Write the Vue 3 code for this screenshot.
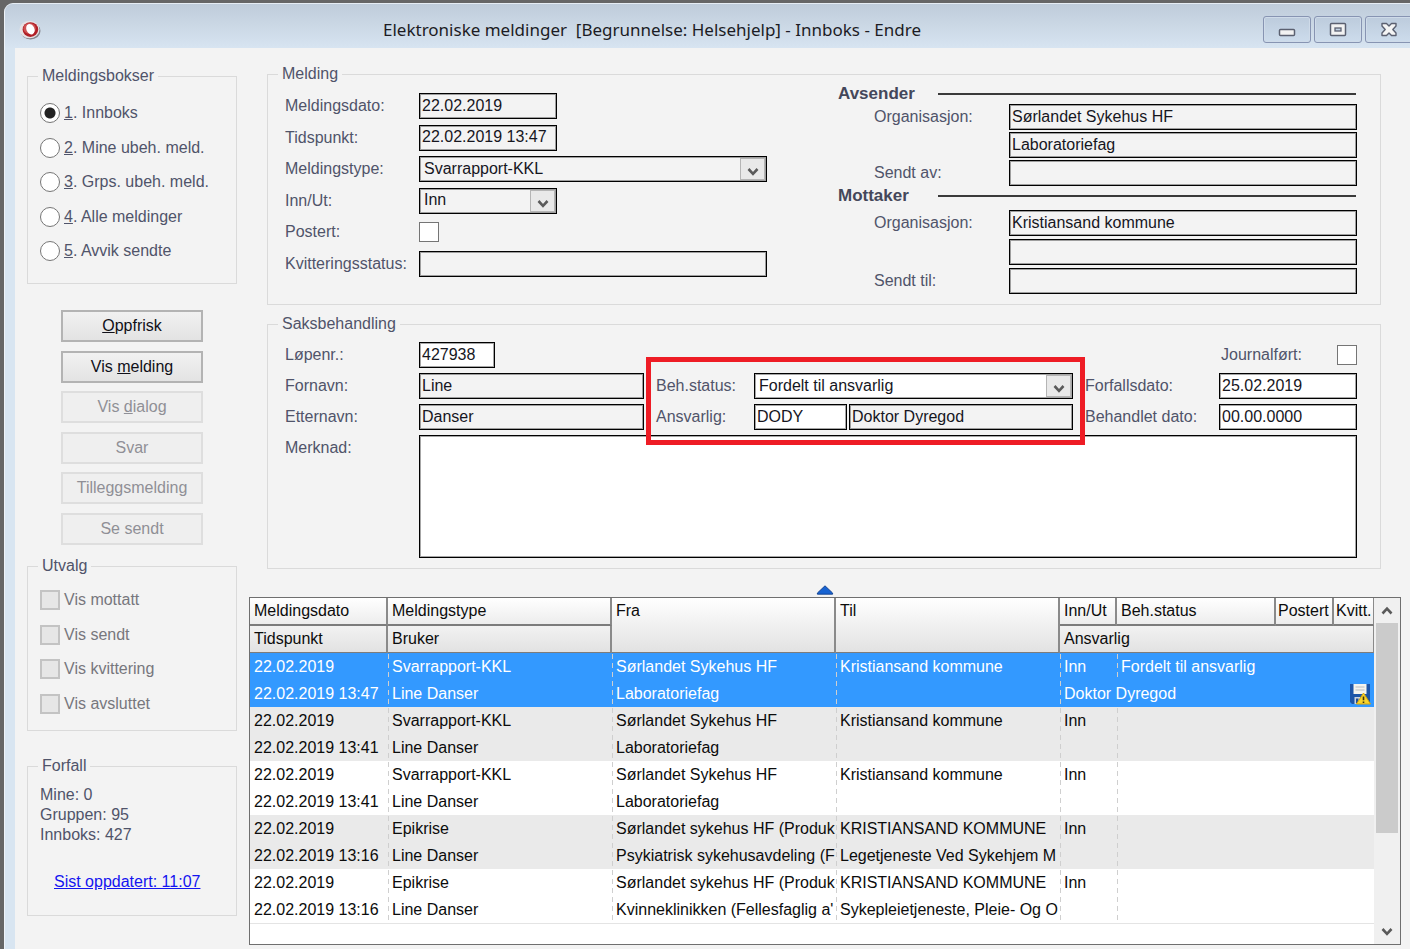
<script setup>
import { ref } from 'vue'

const boxes = ['Innboks', 'Mine ubeh. meld.', 'Grps. ubeh. meld.', 'Alle meldinger', 'Avvik sendte']
const box = ref(0)
const filters = ['Vis mottatt', 'Vis sendt', 'Vis kvittering', 'Vis avsluttet']
const actions = [
  { pre: '', key: 'O', post: 'ppfrisk', off: false },
  { pre: 'Vis ', key: 'm', post: 'elding', off: false },
  { pre: 'Vis ', key: 'd', post: 'ialog', off: true },
  { pre: 'Svar', key: '', post: '', off: true },
  { pre: 'Tilleggsmelding', key: '', post: '', off: true },
  { pre: 'Se sendt', key: '', post: '', off: true }
]
const messages = [
  { time: '13:47', type: 'Svarrapport-KKL', from: 'Sørlandet Sykehus HF', unit: 'Laboratoriefag', to: 'Kristiansand kommune', toUnit: '', status: 'Fordelt til ansvarlig', owner: 'Doktor Dyregod' },
  { time: '13:41', type: 'Svarrapport-KKL', from: 'Sørlandet Sykehus HF', unit: 'Laboratoriefag', to: 'Kristiansand kommune', toUnit: '', status: '', owner: '' },
  { time: '13:41', type: 'Svarrapport-KKL', from: 'Sørlandet Sykehus HF', unit: 'Laboratoriefag', to: 'Kristiansand kommune', toUnit: '', status: '', owner: '' },
  { time: '13:16', type: 'Epikrise', from: 'Sørlandet sykehus HF (Produk', unit: 'Psykiatrisk sykehusavdeling (F', to: 'KRISTIANSAND KOMMUNE', toUnit: 'Legetjeneste Ved Sykehjem M', status: '', owner: '' },
  { time: '13:16', type: 'Epikrise', from: 'Sørlandet sykehus HF (Produk', unit: "Kvinneklinikken (Fellesfaglig a'", to: 'KRISTIANSAND KOMMUNE', toUnit: 'Sykepleietjeneste, Pleie- Og O', status: '', owner: '' }
]
const selected = ref(0)
</script>

<template>
  <div class="desktop">
    <div class="window">
      <header class="titlebar">
        <svg class="logo" width="22" height="20" viewBox="0 0 22 20" aria-hidden="true">
          <ellipse cx="11.5" cy="11" rx="10" ry="8.5" fill="#85858c" />
          <ellipse cx="10.5" cy="9.5" rx="10" ry="8.8" fill="#e6e2e4" />
          <ellipse cx="11.4" cy="9.6" rx="7.8" ry="7.4" fill="#b01f26" />
          <ellipse cx="10.6" cy="8.4" rx="6.2" ry="5.4" fill="#cf5253" />
          <ellipse cx="11.4" cy="9.2" rx="4" ry="5.4" fill="#fff" transform="rotate(-24 11.4 9.2)" />
        </svg>
        <h1>Elektroniske meldinger&nbsp; [Begrunnelse: Helsehjelp] - Innboks - Endre</h1>
        <div class="controls">
          <button type="button" aria-label="Minimer">
            <svg width="18" height="16" viewBox="0 0 18 16"><rect x="1.5" y="7.5" width="15" height="6" rx="1" fill="#f2f2f2" stroke="#5b6070" stroke-width="1.5" /></svg>
          </button>
          <button type="button" aria-label="Maksimer">
            <svg width="18" height="16" viewBox="0 0 18 16"><rect x="1.5" y="1.5" width="15" height="12" rx="1" fill="#f2f2f2" stroke="#5b6070" stroke-width="1.5" /><rect x="6" y="6" width="6" height="3" fill="#c3d2e2" stroke="#5b6070" stroke-width="1.3" /></svg>
          </button>
          <button type="button" aria-label="Lukk">
            <svg width="18" height="16" viewBox="0 0 18 16"><path d="M2 1.500H6.500L9 4 11.500 1.500H16V4L12.800 7.500 16 11V13.500H11.500L9 11 6.500 13.500H2V11L5.200 7.500 2 4Z" fill="#f4f4f4" stroke="#5b6070" stroke-width="1.4" stroke-linejoin="round" /></svg>
          </button>
        </div>
      </header>

      <div class="client">
        <aside class="side">
          <fieldset class="boxes">
            <legend>Meldingsbokser</legend>
            <div class="options">
              <label v-for="(b, i) in boxes" :key="b" class="option">
                <input v-model="box" type="radio" name="box" :value="i" /><span><u>{{ i + 1 }}</u>. {{ b }}</span>
              </label>
            </div>
          </fieldset>

          <div class="actions">
            <button v-for="a in actions" :key="a.pre + a.key" type="button" :disabled="a.off">{{ a.pre }}<u v-if="a.key">{{ a.key }}</u>{{ a.post }}</button>
          </div>

          <fieldset class="filters" disabled>
            <legend>Utvalg</legend>
            <div class="options">
              <label v-for="f in filters" :key="f" class="option">
                <input type="checkbox" /><span>{{ f }}</span>
              </label>
            </div>
          </fieldset>

          <fieldset class="due">
            <legend>Forfall</legend>
            <p>Mine: 0<br />Gruppen: 95<br />Innboks: 427</p>
            <a href="#">Sist oppdatert: 11:07</a>
          </fieldset>
        </aside>

        <main class="main">
          <fieldset class="group message">
            <legend>Melding</legend>
            <div class="rows">
              <div class="row"><label for="mdate">Meldingsdato:</label><input id="mdate" class="field short" value="22.02.2019" readonly /></div>
              <div class="row"><label for="mtime">Tidspunkt:</label><input id="mtime" class="field short" value="22.02.2019 13:47" readonly /></div>
              <div class="row"><label for="mtype">Meldingstype:</label>
                <div class="combo long"><select id="mtype" class="field"><option>Svarrapport-KKL</option></select><span class="drop"><svg width="12" height="10" viewBox="0 0 12 10"><path d="M1.5 2 6 6.8 10.5 2" /></svg></span></div>
              </div>
              <div class="row"><label for="dir">Inn/Ut:</label>
                <div class="combo short"><select id="dir" class="field"><option>Inn</option></select><span class="drop"><svg width="12" height="10" viewBox="0 0 12 10"><path d="M1.5 2 6 6.8 10.5 2" /></svg></span></div>
              </div>
              <div class="row"><label for="posted">Postert:</label><input id="posted" type="checkbox" /></div>
              <div class="row"><label for="receipt">Kvitteringsstatus:</label><input id="receipt" class="field long" readonly /></div>
            </div>
            <div class="parties">
              <section>
                <h2>Avsender</h2>
                <div class="party">
                  <label for="sorg">Organisasjon:</label><input id="sorg" class="field" value="Sørlandet Sykehus HF" readonly />
                  <input class="field second" aria-label="Avdeling" value="Laboratoriefag" readonly />
                  <label for="sby">Sendt av:</label><input id="sby" class="field" readonly />
                </div>
              </section>
              <section>
                <h2>Mottaker</h2>
                <div class="party receiver">
                  <label for="rorg">Organisasjon:</label><input id="rorg" class="field" value="Kristiansand kommune" readonly />
                  <input class="field second" aria-label="Avdeling" readonly />
                  <label for="rto">Sendt til:</label><input id="rto" class="field" readonly />
                </div>
              </section>
            </div>
          </fieldset>

          <fieldset class="group handling">
            <legend>Saksbehandling</legend>
            <div class="case">
              <label for="serial">Løpenr.:</label>
              <input id="serial" class="field edit serial" value="427938" />
              <label for="journal" class="journal-label">Journalført:</label>
              <input id="journal" class="journal" type="checkbox" />

              <label for="first" class="c1">Fornavn:</label>
              <input id="first" class="field" value="Line" readonly />
              <div class="assign">
                <label for="status">Beh.status:</label>
                <div class="combo wide"><select id="status" class="field edit"><option>Fordelt til ansvarlig</option></select><span class="drop"><svg width="12" height="10" viewBox="0 0 12 10"><path d="M1.5 2 6 6.8 10.5 2" /></svg></span></div>
                <label for="owner">Ansvarlig:</label>
                <input id="owner" class="field edit" value="DODY" />
                <input class="field" aria-label="Navn på ansvarlig" value="Doktor Dyregod" readonly />
              </div>
              <label for="deadline" class="c4">Forfallsdato:</label>
              <input id="deadline" class="field edit" value="25.02.2019" />

              <label for="last" class="c1">Etternavn:</label>
              <input id="last" class="field" value="Danser" readonly />
              <label for="handled" class="c4">Behandlet dato:</label>
              <input id="handled" class="field edit" value="00.00.0000" />

              <label for="note" class="c1">Merknad:</label>
              <textarea id="note" class="field edit note"></textarea>
            </div>
          </fieldset>

          <svg class="collapse" width="18" height="10" viewBox="0 0 18 10" aria-hidden="true"><path d="M9 .8 16.6 8V9.2H1.4V8Z" fill="#1763d2" stroke="#123f8c" stroke-width=".9" /></svg>

          <div class="list">
            <table>
              <colgroup><col class="k1" /><col class="k2" /><col class="k2" /><col class="k2" /><col class="k5" /><col class="k6" /><col class="k7" /><col class="k8" /></colgroup>
              <thead>
                <tr><th>Meldingsdato</th><th>Meldingstype</th><th rowspan="2" class="tall">Fra</th><th rowspan="2" class="tall">Til</th><th>Inn/Ut</th><th>Beh.status</th><th class="tight">Postert</th><th class="tight last">Kvitt.</th></tr>
                <tr class="lower"><th>Tidspunkt</th><th>Bruker</th><th colspan="4" class="last">Ansvarlig</th></tr>
              </thead>
              <tbody v-for="(m, i) in messages" :key="i" :class="{ on: selected === i }" @click="selected = i">
                <tr><td>22.02.2019</td><td class="d">{{ m.type }}</td><td class="d">{{ m.from }}</td><td class="d">{{ m.to }}</td><td class="d">Inn</td><td class="d" colspan="3">{{ m.status }}</td></tr>
                <tr>
                  <td>22.02.2019 {{ m.time }}</td><td class="d">Line Danser</td><td class="d">{{ m.unit }}</td><td class="d">{{ m.toUnit }}</td>
                  <template v-if="m.owner">
                    <td class="d" colspan="3">{{ m.owner }}</td>
                    <td class="flag">
                      <svg width="22" height="22" viewBox="0 0 22 22" role="img" aria-label="Varsel">
                        <path d="M1 1H21V21H3L1 19Z" fill="#1d56a8" />
                        <path d="M4.5 1H17.5V11H4.5Z" fill="#f4f4ee" />
                        <path d="M6.5 4H15.5M6.5 7H15.5" stroke="#b9bcc0" stroke-width="1.2" />
                        <path d="M5.5 14H13V21H5.5Z" fill="#c9d3de" />
                        <path d="M7 15.5H9.5V20H7Z" fill="#244f8e" />
                        <path d="M14.5 10 21.5 21H7.5Z" fill="#f8d42c" stroke="#d3a50d" stroke-linejoin="round" />
                        <path d="M14.5 13.5V17.3M14.5 18.5V20" stroke="#3b3310" stroke-width="1.6" />
                      </svg>
                    </td>
                  </template>
                  <template v-else><td class="d"></td><td class="d" colspan="3"></td></template>
                </tr>
              </tbody>
            </table>
            <div class="scroll">
              <button type="button" aria-label="Rull opp"><svg width="12" height="10" viewBox="0 0 12 10"><path d="M1.5 7.5 6 2.7 10.5 7.5" /></svg></button>
              <div class="track"><div class="thumb"></div></div>
              <button type="button" aria-label="Rull ned"><svg width="12" height="10" viewBox="0 0 12 10"><path d="M1.5 2 6 6.8 10.5 2" /></svg></button>
            </div>
          </div>
        </main>
      </div>
    </div>
  </div>
</template>

<style>
body { margin: 0; background: #666; }
</style>

<style scoped>
* { box-sizing: border-box; }
.desktop {
  min-height: 100vh;
  padding: 3px 0 0 4px;
  background: #666;
  display: flex;
  font: 16px/20px "Liberation Sans", Arial, sans-serif;
  color: #50546a;
}
.window {
  flex: 1;
  min-width: 0;
  display: flex;
  flex-direction: column;
  border-top: 1px solid #e6edf4;
  border-left: 1px solid #eef3f8;
  border-top-left-radius: 9px;
  background: #d8e5f1;
  overflow: hidden;
}
button, input, select, textarea { font: inherit; margin: 0; border-radius: 0; }
.titlebar {
  height: 44px;
  flex: none;
  display: grid;
  grid-template-columns: 36px 1fr 147px;
  align-items: center;
  background: linear-gradient(#bfccda, #d7e4f1);
}
.logo { margin: 16px 0 0 14px; align-self: start; }
h1 { margin: 8px 0 0; font: 17px/20px "Noto Sans", "Open Sans", sans-serif; color: #1c1c24; text-align: center; white-space: nowrap; }
.controls { display: flex; gap: 3px; align-self: start; margin-top: 12px; }
.controls button {
  width: 48px;
  height: 27px;
  flex: none;
  padding: 0;
  display: grid;
  place-items: center;
  border: 1px solid #8794b2;
  border-radius: 3px;
  background: linear-gradient(#bccbdc, #cddcec);
  box-shadow: inset 0 0 0 1px #cfdbe9;
}
.client {
  flex: 1;
  margin-left: 10px;
  padding: 16px 9px 4px 12px;
  background: #f3f3f3;
  display: flex;
}
fieldset { margin: 0; min-width: 0; border: 1px solid #dadada; }
legend { padding: 0 4px; line-height: 20px; }
.side { width: 210px; flex: none; padding-top: 2px; }
.side fieldset { padding: 0 10px 0 12px; }
.side legend { margin-left: -2px; }
.boxes { height: 218px; }
.options { display: flex; flex-direction: column; justify-content: space-between; }
.boxes .options { height: 158px; margin-top: 17px; }
.option { display: flex; align-items: center; gap: 4px; height: 20px; white-space: nowrap; }
input[type="radio"], input[type="checkbox"] {
  appearance: none;
  width: 20px;
  height: 20px;
  flex: none;
  border: 1px solid #757575;
  background: #fff;
}
input[type="radio"] { border-radius: 50%; }
input[type="radio"]:checked { background: radial-gradient(circle, #222 5px, #fff 6px); }
input[type="checkbox"]:disabled { border: 2px solid #c3c3c3; background: #e6e6e6; }
.actions { display: flex; flex-direction: column; justify-content: space-between; height: 235px; margin: 26px 34px 0; }
.actions button {
  height: 32px;
  padding: 0;
  border: 2px solid #b3b3b3;
  background: linear-gradient(#f1f1f1, #e3e3e3);
  color: #101018;
}
.actions button:disabled { border-color: #dedede; background: #efefef; color: #8f8f96; }
.filters { height: 175px; margin-top: 11px; color: #77777d; }
.filters legend { color: #50546a; }
.filters .options { height: 124px; margin-top: 14px; }
.due { height: 160px; margin-top: 25px; }
.due p { margin: 9px 0 27px; }
.due a { margin-left: 14px; color: #1414f0; }

.main { flex: 1; min-width: 0; margin-left: 12px; display: flex; flex-direction: column; }
.group { margin: 0 20px 0 18px; padding: 0 23px 10px 17px; }
.group legend { margin-left: -7px; }
.message { display: flex; justify-content: space-between; }
.handling { margin-top: 9px; }
.rows { display: flex; flex-direction: column; justify-content: space-between; height: 184px; margin: 9px 0 14px; }
.row { display: flex; align-items: center; height: 26px; }
.row label { width: 134px; }
label { white-space: nowrap; }
.field {
  display: block;
  width: 100%;
  height: 26px;
  padding: 0 0 1px 2px;
  border: 1px solid #000;
  box-shadow: inset 0 0 0 1px rgba(0, 0, 0, 0.35);
  background: #f3f3f3;
  color: #16161e;
  outline: none;
}
.edit { background: #fff; }
.short { width: 138px; }
.long { width: 348px; }
.combo { position: relative; }
.combo select { appearance: none; padding-left: 4px; }
.drop {
  position: absolute;
  top: 2px;
  right: 2px;
  bottom: 2px;
  width: 25px;
  display: grid;
  place-items: center;
  padding-top: 6px;
  border: 1px solid #b5b5b5;
  background: #e9e9e9;
  pointer-events: none;
}
.drop path, .scroll path { fill: none; stroke: #5a5a5a; stroke-width: 2.6; }
.parties { width: 519px; }
h2 { display: grid; grid-template-columns: 100px 1fr; align-items: center; margin: 0; font: bold 17px/20px "Liberation Sans", Arial, sans-serif; color: #44475a; }
h2::after { content: ""; height: 2px; margin-right: 1px; background: #3a3a3a; }
.party { display: grid; grid-template-columns: 135px 348px; justify-content: end; align-items: center; row-gap: 2px; }
.receiver { margin-top: 4px; row-gap: 3px; }
.second { grid-column: 2; }

.case {
  display: grid;
  grid-template-columns: 134px minmax(0, 1fr) 441px 134px 138px;
  grid-template-rows: 26px 26px 26px auto;
  row-gap: 5px;
  align-items: center;
  margin-top: 8px;
}
.c1 { grid-column: 1; }
.c4 { grid-column: 4; }
.journal-label { grid-column: 5; grid-row: 1; padding-left: 2px; }
.serial { width: 76px; }
.journal { grid-column: 5; grid-row: 1; justify-self: end; }
.assign {
  position: relative;
  grid-column: 3;
  grid-row: 2 / span 2;
  display: grid;
  grid-template-columns: 98px 93px 1fr;
  row-gap: 5px;
  align-items: center;
  padding: 0 12px;
}
.assign .wide { grid-column: 2 / span 2; }
.assign > input:last-child { width: auto; margin-left: 2px; }
.assign::after { content: ""; position: absolute; inset: -16px 0 -15px 2px; border: 5px solid #ee1c25; pointer-events: none; }
.case > label[for="note"] { align-self: start; margin-top: 3px; }
.note { grid-column: 2 / -1; height: 123px; resize: none; }

.collapse { align-self: center; margin: 16px 0 2px; flex: none; }
.list { flex: 1; display: flex; border: 1px solid #6f6f6f; background: #fff; color: #0c0c0c; }
table { flex: 1; width: 0; align-self: flex-start; table-layout: fixed; border-collapse: separate; border-spacing: 0; border-bottom: 1px solid #e4e4e4; }
.k1 { width: 138px; }
.k2 { width: 224px; }
.k5 { width: 57px; }
.k6 { width: 159px; }
.k7 { width: 58px; }
.k8 { width: 40px; }
th, td { height: 27px; padding: 0 0 0 4px; text-align: left; font-weight: normal; white-space: nowrap; overflow: hidden; }
th { height: 28px; background: linear-gradient(#fff, #ededed); border-right: 2px solid #8a8a8a; border-bottom: 2px solid #7c7c7c; }
.lower th { height: 27px; background: linear-gradient(#f2f2f2, #e2e2e2); border-bottom-width: 1px; }
th.tall { vertical-align: top; padding-top: 3px; background: linear-gradient(#fff, #e2e2e2); border-bottom-width: 1px; }
th.last { border-right-width: 1px; }
th.tight { padding: 0 0 0 2px; }
td.d { background: repeating-linear-gradient(transparent 0 1px, #cfcfcf 1px 6px, transparent 6px 9px) 0 0 / 1px 27px no-repeat; padding-left: 4px; }
tbody:nth-of-type(even) { background: #eaeaea; }
tbody.on { background: #3399ff; color: #fff; }
td.flag { padding: 0 3px 0 0; text-align: right; }
.flag svg { display: inline-block; vertical-align: middle; }
.scroll { width: 26px; flex: none; display: flex; flex-direction: column; padding: 0 2px; background: #f0f0f0; }
.scroll button { height: 25px; padding: 0; border: 0; background: transparent; display: grid; place-items: center; }
.track { flex: 1; }
.thumb { height: 71%; background: #cbcbcb; }
</style>
